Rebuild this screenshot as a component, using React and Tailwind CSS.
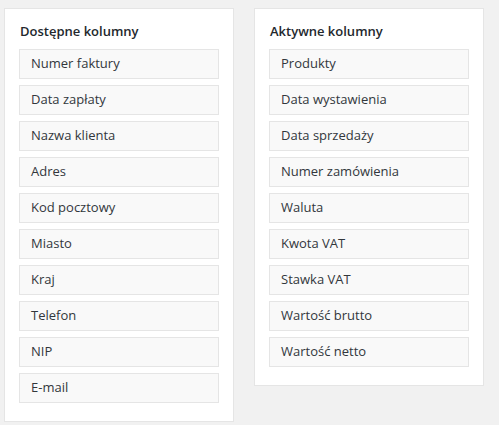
import React from 'react';

const available = [
  'Numer faktury',
  'Data zapłaty',
  'Nazwa klienta',
  'Adres',
  'Kod pocztowy',
  'Miasto',
  'Kraj',
  'Telefon',
  'NIP',
  'E-mail',
];

const active = [
  'Produkty',
  'Data wystawienia',
  'Data sprzedaży',
  'Numer zamówienia',
  'Waluta',
  'Kwota VAT',
  'Stawka VAT',
  'Wartość brutto',
  'Wartość netto',
];

function ColumnBox({ title, items }) {
  return (
    <div className="w-[230px] bg-white border border-[#e5e5e5] px-[14px] pt-[12px] pb-[18px]">
      <h3 className="text-[13px] leading-[20px] font-semibold text-[#23282d] mb-[8px] pl-[1px]">{title}</h3>
      <ul className="flex flex-col gap-[6px]">
        {items.map((item) => (
          <li
            key={item}
            className="h-[30px] flex items-center px-[11px] bg-[#f9f9f9] border border-[#e5e5e5] text-[13px] text-[#32373c]"
          >
            {item}
          </li>
        ))}
      </ul>
    </div>
  );
}

export default function App() {
  return (
    <div
      className="min-h-[425px] bg-[#f1f1f1] pt-[8px] pl-[4px] flex items-start gap-[20px]"
      style={{ fontFamily: '"Open Sans", "Noto Sans", sans-serif' }}
    >
      <ColumnBox title="Dostępne kolumny" items={available} />
      <ColumnBox title="Aktywne kolumny" items={active} />
    </div>
  );
}
